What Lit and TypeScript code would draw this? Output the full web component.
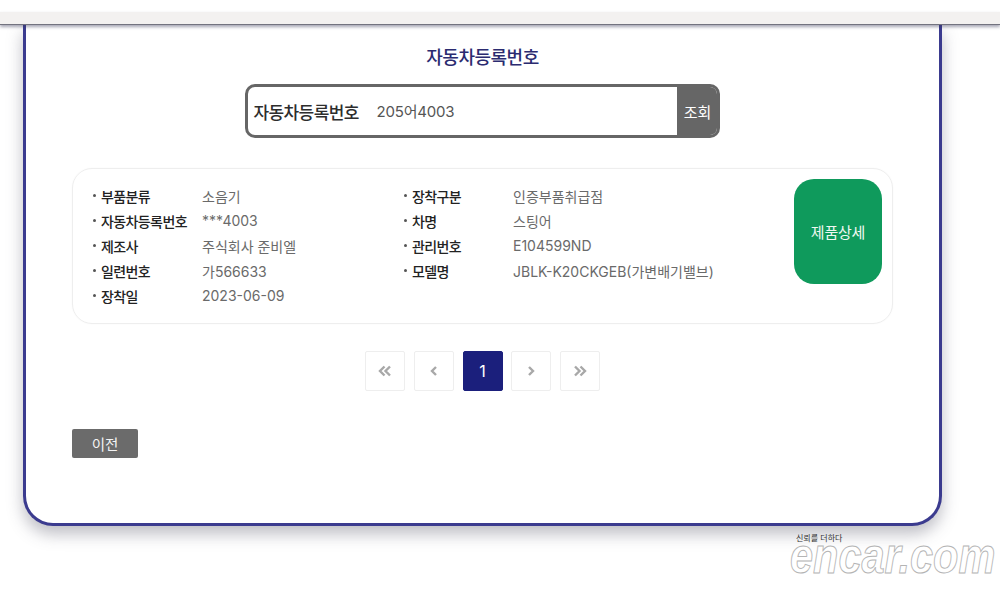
import { LitElement, html, css, svg } from "lit";
import { customElement } from "lit/decorators.js";

const left = [
  ["부품분류", "소음기"],
  ["자동차등록번호", "***4003"],
  ["제조사", "주식회사 준비엘"],
  ["일련번호", "가566633"],
  ["장착일", "2023-06-09"],
];
const right = [
  ["장착구분", "인증부품취급점"],
  ["차명", "스팅어"],
  ["관리번호", "E104599ND"],
  ["모델명", "JBLK-K20CKGEB(가변배기밸브)"],
];
const chev = {
  first: "M9.5 5.5 L5 10 L9.5 14.5 M15 5.5 L10.5 10 L15 14.5",
  prev: "M12 6 L8 10 L12 14",
  next: "M8 6 L12 10 L8 14",
  last: "M5 5.5 L9.5 10 L5 14.5 M10.5 5.5 L15 10 L10.5 14.5",
};

@customElement("app-root")
export class AppRoot extends LitElement {
  static styles = css`
    :host {
      display: block;
      position: relative;
      width: 1000px;
      height: 600px;
      overflow: hidden;
      background: #fff;
      font-family: Inter, "Noto Sans CJK KR", "Noto Sans", sans-serif;
      padding-top: 12px;
      box-sizing: border-box;
    }
    .bar {
      height: 12px;
      background: #f3f1f0;
      border-bottom: 1px solid #73737f;
      position: relative;
      z-index: 2;
      box-shadow: 0 2px 3px rgba(60, 60, 90, 0.45);
    }
    .card {
      box-sizing: border-box;
      margin-left: 23px;
      width: 919px;
      height: 501px;
      border: 3px solid #3b3b8f;
      border-top: none;
      border-radius: 0 0 30px 30px;
      background: #fff;
      box-shadow: 0 8px 16px rgba(70, 70, 90, 0.35);
      padding: 21px 46px 0;
      display: flex;
      flex-direction: column;
    }
    h1 {
      margin: 0;
      text-align: center;
      font-size: 18px;
      line-height: 24px;
      font-weight: 500;
      letter-spacing: -0.5px;
      color: #2b2b70;
    }
    .search {
      box-sizing: border-box;
      align-self: center;
      margin-top: 14px;
      margin-left: -1px;
      width: 475px;
      height: 54px;
      border: 3px solid #666;
      border-radius: 10px;
      display: flex;
      align-items: center;
      overflow: hidden;
    }
    .search b {
      margin-left: 6px;
      font-size: 17px;
      font-weight: 500;
      letter-spacing: -0.6px;
      color: #2d2d2d;
      width: 123px;
    }
    .search span {
      flex: 1;
      padding-bottom: 2px;
      font-size: 15px;
      letter-spacing: -0.2px;
      font-weight: 400;
      color: #555;
    }
    .search button {
      width: 40px;
      height: 100%;
      border: none;
      padding: 0 0 0 2px;
      background: #666;
      color: #fff;
      font: inherit;
      font-size: 15px;
    }
    .info {
      box-sizing: border-box;
      margin-top: 30px;
      height: 156px;
      border: 1px solid #eeeeee;
      border-radius: 20px;
      padding: 10px 10px 0 20px;
      display: flex;
      box-shadow: 0 0 2px rgba(0, 0, 0, 0.03);
    }
    .col {
      margin-top: 4px;
      display: grid;
      grid-auto-rows: 25px;
      align-items: center;
      align-content: start;
      font-size: 14px;
    }
    .col.l { width: 311px; grid-template-columns: 109px auto; }
    .col.r { flex: 1; grid-template-columns: 109px auto; }
    .k {
      font-weight: 500;
      color: #222;
      letter-spacing: -0.6px;
      white-space: nowrap;
    }
    .k::before {
      content: "";
      display: inline-block;
      width: 3px;
      height: 3px;
      border-radius: 50%;
      background: #555;
      margin: 0 5px 4px 0;
      vertical-align: middle;
    }
    .v { color: #6a6a6a; font-weight: 400; white-space: nowrap; font-size: 14px; }
    .detail {
      width: 88px;
      height: 105px;
      border: none;
      border-radius: 20px;
      background: #0f9a5c;
      color: #f0f8f2;
      font: inherit;
      font-size: 15px;
      letter-spacing: -0.2px;
    }
    .pager {
      margin-top: 27px;
      align-self: center;
      display: flex;
      gap: 8.75px;
    }
    .pager div {
      box-sizing: border-box;
      width: 40px;
      height: 40px;
      border: 1px solid #eeeeee;
      display: flex;
      align-items: center;
      justify-content: center;
      color: #fff;
      font-size: 16px;
      border-radius: 2px;
    }
    .pager div.on { background: #1b1f7c; border-color: #1b1f7c; }
    .pager svg { width: 20px; height: 20px; }
    .pager path { fill: none; stroke: #a8a8a8; stroke-width: 2.4; }
    .back {
      align-self: flex-start;
      margin-top: 38px;
      width: 66px;
      height: 29px;
      border: none;
      border-radius: 2px;
      background: #6b6b6b;
      color: #f4f4f4;
      font: inherit;
      font-size: 14.5px;
      padding: 0;
    }
    .mark {
      position: absolute;
      left: 790px;
      top: 533px;
      width: 210px;
    }
    .mark small {
      display: block;
      margin-left: 6px;
      font-size: 8px;
      line-height: 10px;
      color: #333;
    }
    .mark strong {
      display: block;
      margin-top: 2px;
      font-family: "Liberation Sans", sans-serif;
      font-style: italic;
      font-weight: 700;
      font-size: 50px;
      line-height: 22px;
      color: #fff;
      -webkit-text-stroke: 1px #b4b4b4;
      white-space: nowrap;
      transform: scaleX(0.83);
      transform-origin: left center;
    }
  `;

  private rows(list: string[][]) {
    return list.map(
      ([k, v]) => html`<div class="k">${k}</div><div class="v">${v}</div>`
    );
  }

  private arrow(d: string) {
    return html`<div><svg viewBox="0 0 20 20">${svg`<path d=${d}></path>`}</svg></div>`;
  }

  render() {
    return html`
      <div class="bar"></div>
      <div class="card">
        <h1>자동차등록번호</h1>
        <div class="search">
          <b>자동차등록번호</b>
          <span>205어4003</span>
          <button>조회</button>
        </div>
        <div class="info">
          <div class="col l">${this.rows(left)}</div>
          <div class="col r">${this.rows(right)}</div>
          <button class="detail">제품상세</button>
        </div>
        <div class="pager">
          ${this.arrow(chev.first)} ${this.arrow(chev.prev)}
          <div class="on">1</div>
          ${this.arrow(chev.next)} ${this.arrow(chev.last)}
        </div>
        <button class="back">이전</button>
      </div>
      <div class="mark">
        <small>신뢰를 더하다</small>
        <strong>encar.com</strong>
      </div>
    `;
  }
}
